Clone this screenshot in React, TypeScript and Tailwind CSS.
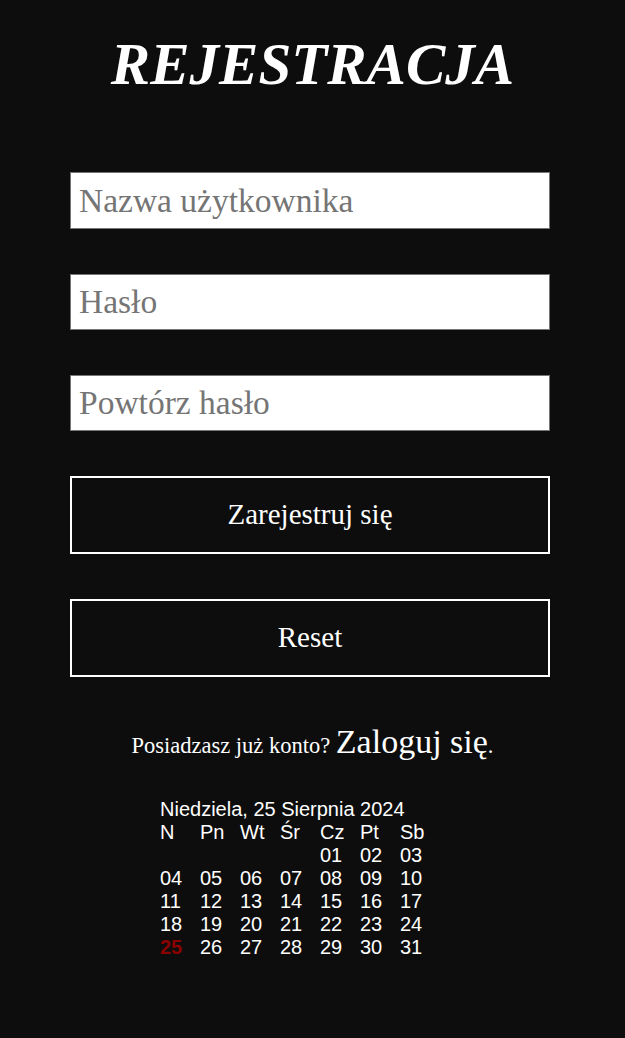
import React from "react";

const dayNames = ["N", "Pn", "Wt", "Śr", "Cz", "Pt", "Sb"];

const days: (string | null)[] = [
  null, null, null, null, "01", "02", "03",
  "04", "05", "06", "07", "08", "09", "10",
  "11", "12", "13", "14", "15", "16", "17",
  "18", "19", "20", "21", "22", "23", "24",
  "25", "26", "27", "28", "29", "30", "31",
];

const serif = { fontFamily: '"Liberation Serif", "DejaVu Serif", serif' };

const Calendar = () => {
  return (
    <div
      className="ml-[160px] mt-[34px] text-white text-[20px] leading-[23px]"
      style={{ fontFamily: '"Liberation Sans", Arial, sans-serif' }}
    >
      <div>Niedziela, 25 Sierpnia 2024</div>
      <div className="grid grid-cols-[repeat(7,40px)]">
        {dayNames.map((d) => (
          <div key={d}>{d}</div>
        ))}
        {days.map((d, i) => (
          <div
            key={i}
            className={d === "25" ? "font-bold text-[#8b0000]" : ""}
          >
            {d ?? ""}
          </div>
        ))}
      </div>
    </div>
  );
};

const App = () => {
  return (
    <div className="bg-[#0d0d0d] min-h-[1038px] w-full pb-10" style={serif}>
      <h1 className="pt-[35px] text-center text-white text-[59px] leading-none font-bold italic">
        REJESTRACJA
      </h1>

      <form className="ml-[70px] w-[480px] mt-[78px] flex flex-col">
        <input
          type="text"
          placeholder="Nazwa użytkownika"
          className="h-[57px] bg-white border border-[#767676] pl-2 text-[33.5px] text-black placeholder:text-[#757575] outline-none"
        />
        <input
          type="password"
          placeholder="Hasło"
          className="mt-[45px] h-[56px] bg-white border border-[#767676] pl-2 text-[33.5px] text-black placeholder:text-[#757575] outline-none"
        />
        <input
          type="password"
          placeholder="Powtórz hasło"
          className="mt-[45px] h-[56px] bg-white border border-[#767676] pl-2 text-[33.5px] text-black placeholder:text-[#757575] outline-none"
        />
        <button
          type="submit"
          className="mt-[45px] h-[78px] border-2 border-white bg-transparent text-white text-[29px]"
        >
          Zarejestruj się
        </button>
        <button
          type="reset"
          className="mt-[45px] h-[78px] border-2 border-white bg-transparent text-white text-[29px]"
        >
          Reset
        </button>
      </form>

      <p className="mt-[47px] text-center text-white text-[22.5px] leading-[36px]">
        Posiadzasz już konto?{" "}
        <a href="#" className="text-[34px] text-white">
          Zaloguj się
        </a>
        .
      </p>

      <Calendar />
    </div>
  );
};

export default App;
